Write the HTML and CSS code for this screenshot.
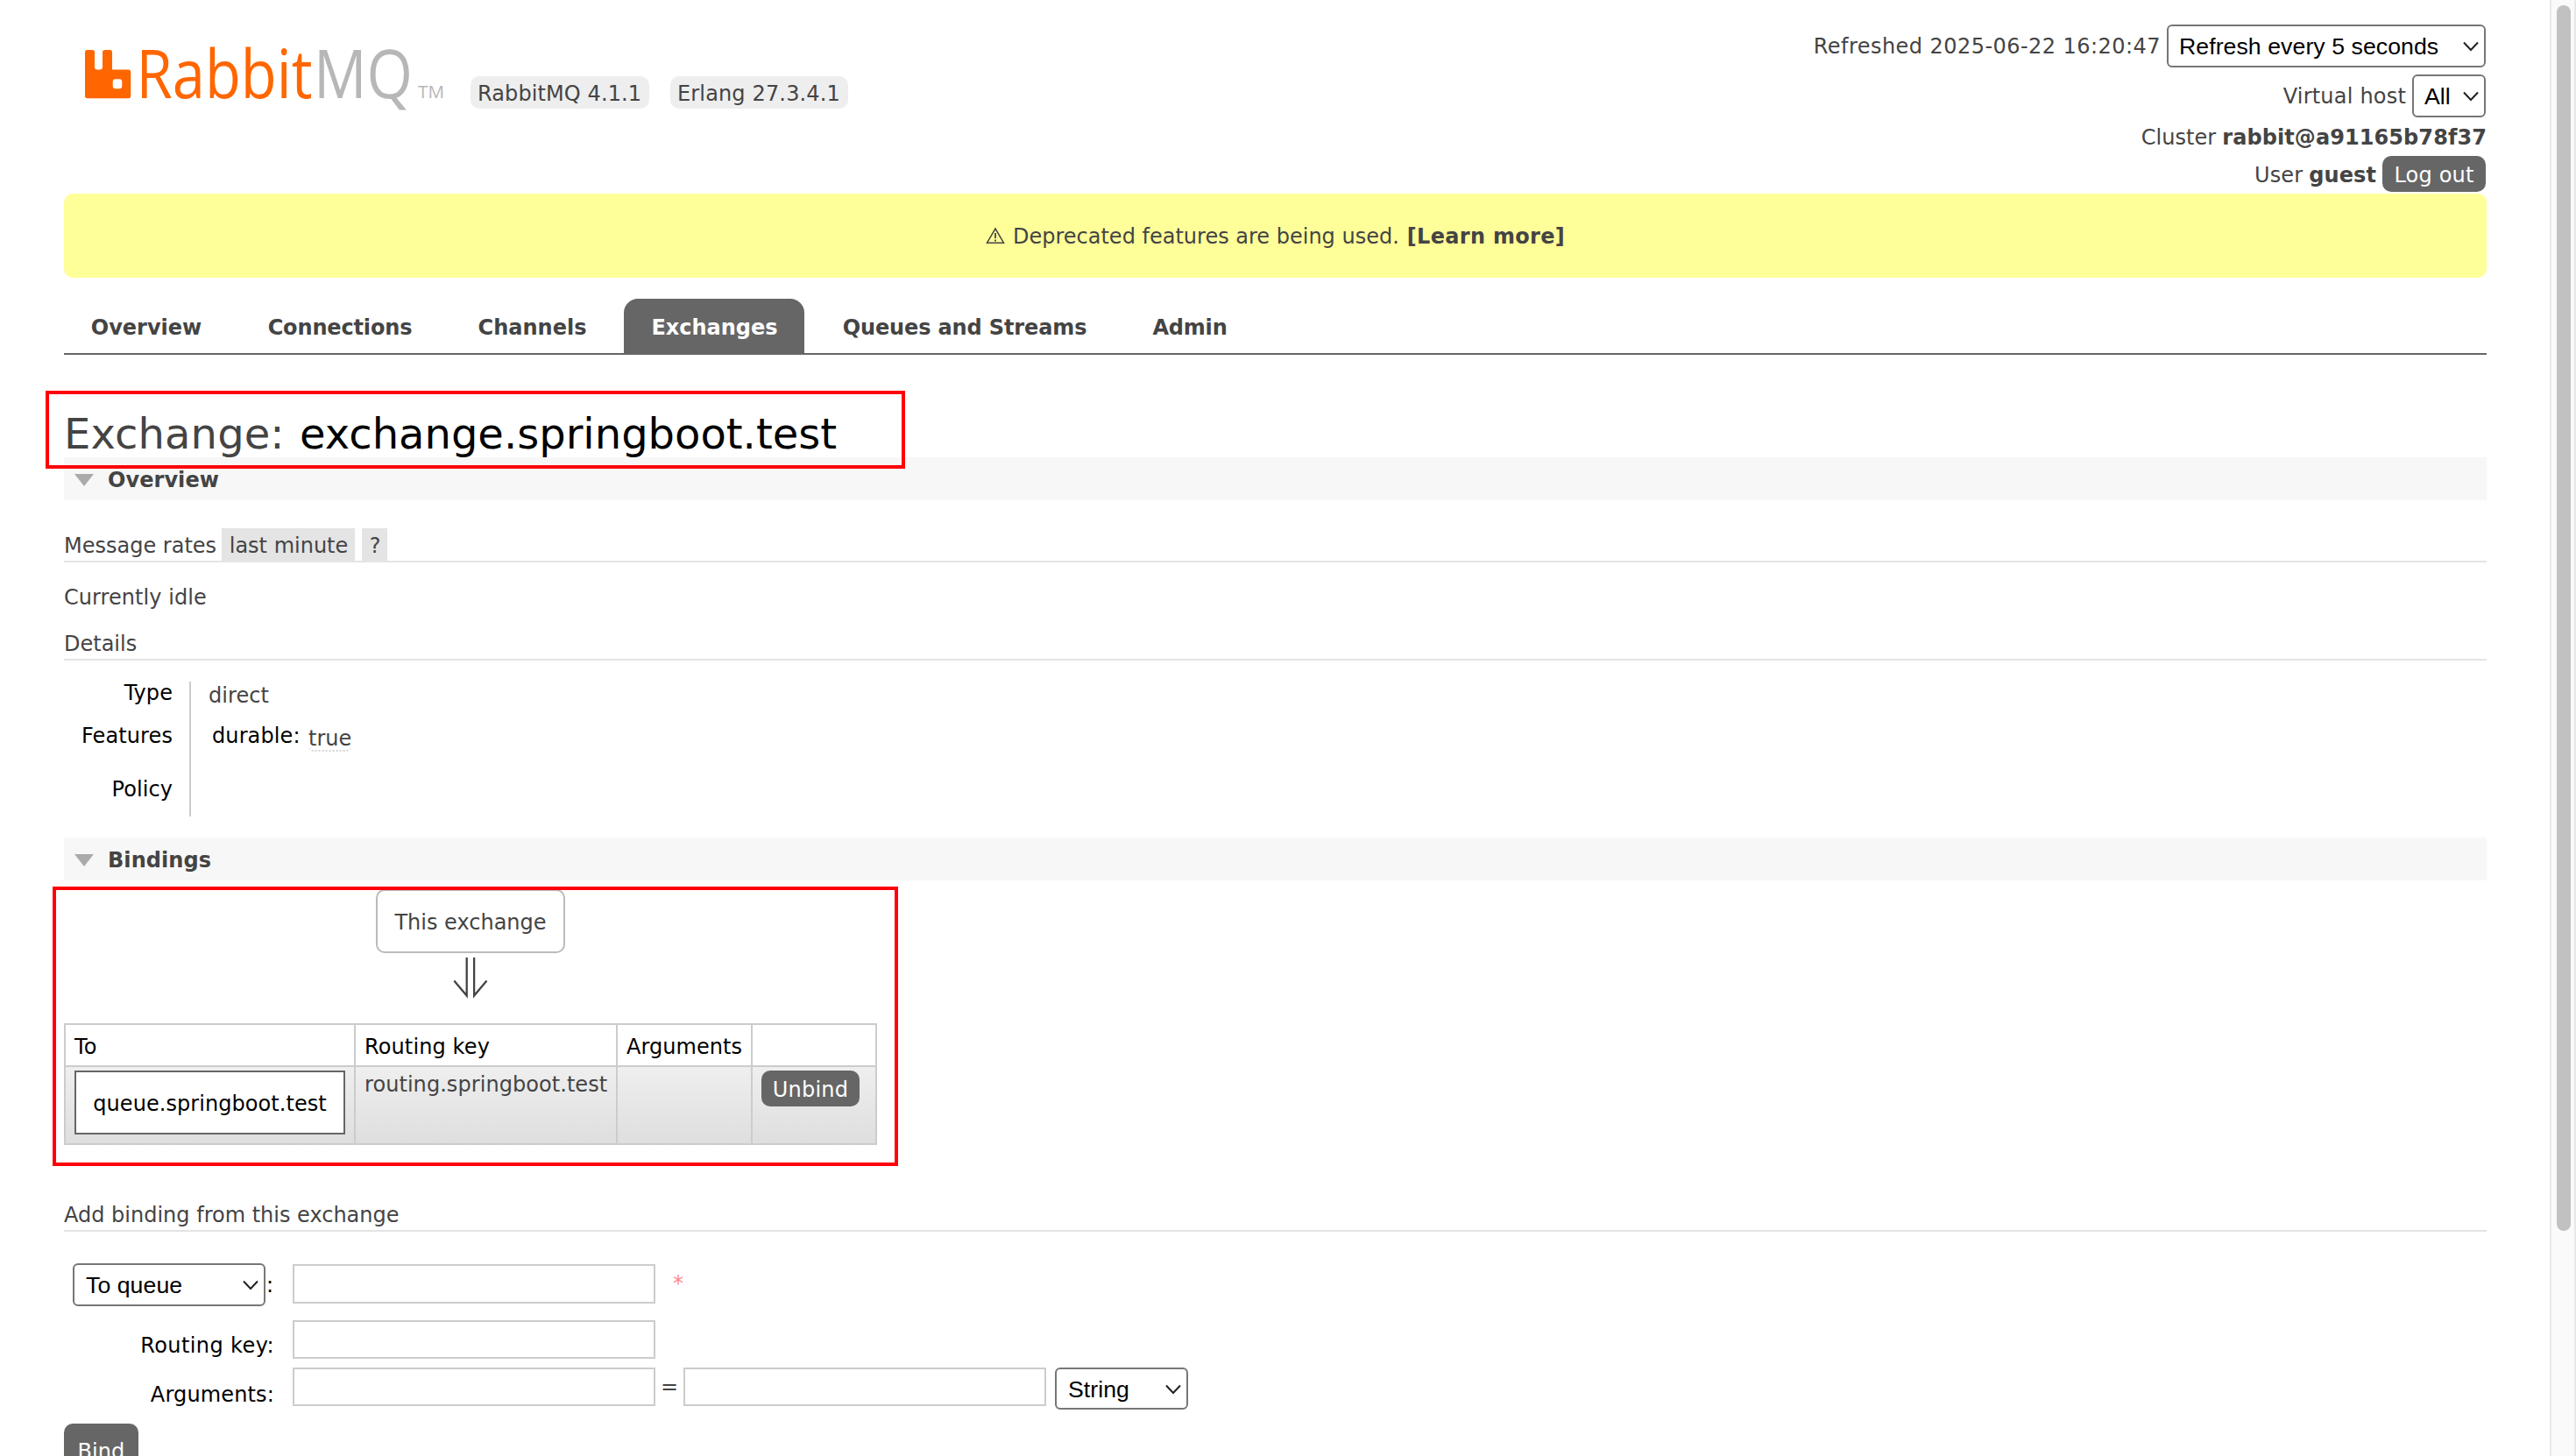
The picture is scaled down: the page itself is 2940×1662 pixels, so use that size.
FILE: index.html
```html
<!DOCTYPE html>
<html lang="en">
<head>
<meta charset="utf-8">
<title>RabbitMQ Management</title>
<link rel="stylesheet" href="styles.css">
</head>
<body>
<div class="page">
  <header class="header">
    <div class="brand">
      <svg class="logo" width="420" height="76" viewBox="90 44 420 76" role="img" aria-label="RabbitMQ">
        <path fill="#f60" fill-rule="evenodd" d="M99.500 57H105.500a2.500 2.500 0 0 1 2.500 2.500V76.500a3 3 0 0 0 3 3h3a3 3 0 0 0 3-3V59.500a2.500 2.500 0 0 1 2.500-2.500H125.500a2.500 2.500 0 0 1 2.500 2.500V79.500H146.500a2.700 2.700 0 0 1 2.700 2.700V109.600a2.700 2.700 0 0 1-2.700 2.700H99.700a2.700 2.700 0 0 1-2.700-2.700V59.500A2.500 2.500 0 0 1 99.500 57ZM132 90.300a3.300 3.300 0 0 0-3.300 3.300v4.400a3.300 3.300 0 0 0 3.300 3.300h4a3.300 3.300 0 0 0 3.300-3.300v-4.400a3.300 3.300 0 0 0-3.300-3.300Z"/>
        <text class="logo-text" x="155.500" y="112.300" fill="#f60" textLength="201" lengthAdjust="spacingAndGlyphs">Rabbit</text>
        <text class="logo-text" x="358" y="112.300" fill="#b7b7b7" textLength="113" lengthAdjust="spacingAndGlyphs">MQ</text>
        <text class="logo-tm" x="477" y="112.300" fill="#b7b7b7" textLength="30" lengthAdjust="spacingAndGlyphs">TM</text>
      </svg>
      <span class="version version-mq">RabbitMQ 4.1.1</span>
      <span class="version version-erl">Erlang 27.3.4.1</span>
    </div>
    <div class="status">
      <div class="status-row row-refresh">
        <span class="refreshed">Refreshed 2025-06-22 16:20:47</span>
        <span class="select select-refresh">Refresh every 5 seconds<svg class="chev" width="20" height="12" viewBox="0 0 20 12"><path d="M2 1.500L10 10L18 1.500"/></svg></span>
      </div>
      <div class="status-row row-vhost">
        <span class="vhost">Virtual host</span>
        <span class="select select-vhost">All<svg class="chev" width="20" height="12" viewBox="0 0 20 12"><path d="M2 1.500L10 10L18 1.500"/></svg></span>
      </div>
      <div class="status-row row-cluster"><span>Cluster</span><b class="cluster-name">rabbit@a91165b78f37</b></div>
      <div class="status-row row-user"><span class="user">User</span><b class="user-name">guest</b><span class="button button-logout">Log out</span></div>
    </div>
  </header>

  <div class="warning"><svg width="22" height="20" viewBox="0 0 22 20"><path d="M11 2L20.500 18.200H1.500Z" fill="none" stroke="#444" stroke-width="1.500"/><path d="M11 7V13M11 14.600V16.400" stroke="#444" stroke-width="1.800"/></svg><span>Deprecated features are being used.</span><b>[Learn more]</b></div>

  <nav class="tabs">
    <a class="tab tab-overview">Overview</a>
    <a class="tab tab-connections">Connections</a>
    <a class="tab tab-channels">Channels</a>
    <a class="tab tab-exchanges selected">Exchanges</a>
    <a class="tab tab-queues">Queues and Streams</a>
    <a class="tab tab-admin">Admin</a>
  </nav>

  <h1 class="title"><span class="title-kind">Exchange:</span><span class="title-name">exchange.springboot.test</span></h1>

  <h2 class="section"><svg width="24" height="16" viewBox="0 0 24 16"><path d="M1 1H23L12 15Z" fill="#aaa"/></svg>Overview</h2>
  <h3 class="sub sub-rates"><span>Message rates</span><span class="tag tag-range">last minute</span><span class="tag tag-help">?</span></h3>
  <p class="idle">Currently idle</p>
  <h3 class="sub sub-details">Details</h3>
  <div class="facts">
    <div class="fact-labels"><span>Type</span><span class="features">Features</span><span>Policy</span></div>
    <div class="fact-values"><span>direct</span><div class="feature"><span class="feature-key">durable:</span><abbr class="feature-value">true</abbr></div></div>
  </div>

  <h2 class="section section-bindings"><svg width="24" height="16" viewBox="0 0 24 16"><path d="M1 1H23L12 15Z" fill="#aaa"/></svg>Bindings</h2>
  <div class="bindings">
    <div class="this-exchange">This exchange</div>
    <svg class="arrow" width="44" height="50" viewBox="515 1091 44 50"><path d="M532.700 1093V1136.500L518.300 1119.500M541.100 1093V1136.500L555.500 1119.500" fill="none" stroke="#444" stroke-width="2.300"/></svg>
    <table class="binding-table">
      <colgroup><col class="col-to"><col class="col-key"><col class="col-args"><col class="col-action"></colgroup>
      <thead><tr><th>To</th><th class="key-head">Routing key</th><th>Arguments</th><th></th></tr></thead>
      <tbody><tr><td class="cell-box"><div class="queue">queue.springboot.test</div></td><td class="cell-text">routing.springboot.test</td><td></td><td class="cell-box"><span class="button button-unbind">Unbind</span></td></tr></tbody>
    </table>
  </div>

  <h3 class="sub sub-add">Add binding from this exchange</h3>
  <form class="form">
    <div class="form-row row-to"><div class="label label-select"><span class="select select-to">To queue<svg class="chev" width="20" height="12" viewBox="0 0 20 12"><path d="M2 1.500L10 10L18 1.500"/></svg></span>:</div><input class="input input-to" type="text"><span class="required">*</span></div>
    <div class="form-row row-key"><div class="label label-key">Routing key:</div><input class="input" type="text"></div>
    <div class="form-row row-args"><div class="label label-args">Arguments:</div><input class="input" type="text"><span class="equals">=</span><input class="input" type="text"><span class="select select-type">String<svg class="chev" width="20" height="12" viewBox="0 0 20 12"><path d="M2 1.500L10 10L18 1.500"/></svg></span></div>
    <span class="button button-bind">Bind</span>
  </form>
</div>
<div class="scrollbar"><div class="thumb"></div></div>
<div class="mark mark-title"></div>
<div class="mark mark-bindings"></div>
</body>
</html>
```
FILE: styles.css
```css
* { box-sizing: border-box; }
html, body { margin: 0; height: 1662px; overflow: hidden; }
body {
  display: flex;
  position: relative;
  width: 2940px;
  background: #fff;
  color: #444;
  font-family: "DejaVu Sans", sans-serif;
  font-size: 24px;
  letter-spacing: 0.06px;
  white-space: nowrap;
}
svg { display: block; flex: none; }
.page { width: 2910px; height: 1662px; padding: 0 72px 0 73px; overflow: hidden; }

/* header */
.header { display: flex; justify-content: space-between; height: 221px; }
.brand { display: flex; padding: 44px 0 0 17px; }
.logo { overflow: visible; }
.logo-text { font-family: "Open Sans", sans-serif; font-size: 77px; font-weight: 400; letter-spacing: 0; }
.logo-tm { font-family: "Open Sans", sans-serif; font-size: 20px; letter-spacing: 0; }
.version { height: 37px; margin-top: 43px; padding-left: 8px; line-height: 40px; background: #eee; border-radius: 10px; }
.version-mq { width: 204px; margin-left: 27px; letter-spacing: 0.1px; }
.version-erl { width: 203px; margin-left: 24px; letter-spacing: 0.15px; }
.status { padding: 28px 1px 0 0; }
.status-row { display: flex; justify-content: flex-end; gap: 7px; }
.row-refresh { height: 57px; line-height: 50px; }
.row-vhost { height: 50px; line-height: 50px; }
.row-cluster { height: 43px; margin-right: -1px; line-height: 44px; }
.row-user { height: 43px; line-height: 44px; }
.refreshed { letter-spacing: 0.45px; }
.vhost { letter-spacing: 0.2px; }
.cluster-name { letter-spacing: 0.08px; }
.user, .user-name { letter-spacing: 0.1px; }

.select {
  position: relative;
  flex: none;
  height: 49px;
  padding-left: 12px;
  border: 2px solid #767676;
  border-radius: 6px;
  background: #fff;
  color: #000;
  font-family: "Liberation Sans", sans-serif;
  font-size: 26.67px;
  line-height: 46px;
  text-align: left;
}
.chev { position: absolute; right: 5px; top: 17px; }
.chev path { fill: none; stroke: #222; stroke-width: 2; }
.select-refresh { width: 364px; }
.select-vhost { width: 84px; }

.button { display: block; height: 41px; border-radius: 10px; background: #666; color: #fff; line-height: 44px; text-align: center; }
.button-logout { width: 118px; letter-spacing: 0.2px; }

.warning { display: flex; justify-content: center; height: 96px; border-radius: 10px; background: #ff9; line-height: 98px; letter-spacing: 0; }
.warning svg { margin: 38px 9px 0 0; }
.warning b { margin-left: 9px; letter-spacing: 0.3px; }

/* navigation */
.tabs { display: flex; gap: 11px; height: 64px; margin-top: 24px; border-bottom: 2px solid #666; }
.tab { height: 62px; border-radius: 16px 16px 0 0; font-weight: bold; line-height: 66px; text-align: center; letter-spacing: 0; }
.selected { background: #666; color: #fff; }
.tab-overview { width: 190px; padding-right: 2px; }
.tab-connections { width: 228px; letter-spacing: -0.15px; }
.tab-channels { width: 188px; padding-left: 1px; }
.tab-exchanges { width: 206px; padding-left: 1px; }
.tab-queues { width: 344px; letter-spacing: -0.13px; }
.tab-admin { width: 148px; letter-spacing: -0.2px; }

/* headings */
.title { display: flex; height: 57px; margin: 60px 0 0; font-size: 48px; font-weight: normal; line-height: 60px; }
.title-kind { width: 269px; letter-spacing: 0.1px; }
.title-name { color: #000; letter-spacing: 0; }
.section { display: flex; height: 49px; margin: 0; padding-left: 11px; background: #f7f7f7; font-size: 24px; line-height: 52px; }
.section svg { margin: 18px 15px 0 0; }
.sub { display: flex; height: 39px; margin: 0; border-bottom: 2px solid #e4e4e4; font-size: 24px; font-weight: normal; line-height: 40px; letter-spacing: 0; }
.sub-rates { margin-top: 32px; }
.sub-rates > span:first-child { width: 180px; }
.tag { height: 37px; padding-left: 1px; background: #e4e4e4; text-align: center; }
.tag-range { width: 152px; }
.tag-help { width: 29px; margin-left: 8px; }
.idle { margin: 20px 0 0; line-height: 40px; }
.sub-details { margin-top: 13px; }

/* details */
.facts { display: flex; height: 154px; margin-top: 24px; line-height: 26px; }
.fact-labels { display: grid; grid-template-rows: 49px 61px 44px; width: 145px; padding-right: 19px; border-right: 2px solid #ccc; color: #000; text-align: right; }
.features { letter-spacing: 0.1px; }
.fact-values { display: grid; grid-template-rows: 49px 61px; padding: 3px 0 0 20px; }
.feature { display: flex; padding-left: 4px; }
.feature-key { width: 110px; margin-top: -3px; color: #000; letter-spacing: 0.1px; }
.feature-value { height: 28px; border-bottom: 2px dotted #d4d4d4; border-radius: 6px; text-decoration: none; letter-spacing: 0; }
.section-bindings { margin-top: 24px; }

/* bindings */
.bindings { display: flex; flex-direction: column; align-items: center; width: 928px; padding-top: 10px; }
.this-exchange { width: 216px; height: 73px; border: 2px solid #bbb; border-radius: 10px; line-height: 72px; text-align: center; letter-spacing: 0; }
.arrow { margin: 3px 0 27px; }
.binding-table { width: 926px; table-layout: fixed; border-collapse: collapse; }
.col-to { width: 331px; }
.col-key { width: 299px; }
.col-args { width: 154px; }
.col-action { width: 142px; }
.binding-table th { height: 48px; padding: 12px 10px 0; border: 2px solid #ccc; color: #000; font-weight: normal; line-height: 26px; text-align: left; vertical-align: top; }
.key-head { letter-spacing: 0.12px; }
.binding-table td { height: 89px; padding: 4px 10px 0; border: 2px solid #ccc; line-height: 26px; vertical-align: top; }
.binding-table tbody tr { background: linear-gradient(#efefef, #dedede); }
.binding-table .cell-text { padding-top: 7px; }
.queue { width: 309px; height: 73px; border: 2px solid #666; background: #fff; color: #000; line-height: 72px; text-align: center; }
.button-unbind { width: 112px; letter-spacing: 0.2px; }
.sub-add { margin-top: 60px; }

/* binding form */
.form { margin-top: 36px; }
.form-row { display: flex; }
.row-to { height: 65px; }
.row-key { height: 54px; }
.row-args { height: 64px; }
.label { width: 241px; margin-right: 20px; padding-right: 1px; color: #000; text-align: right; }
.label-select { display: flex; padding-left: 10px; padding-right: 0; line-height: 50px; }
.select-to { width: 220px; margin-right: 1px; padding-left: 13px; }
.label-key { padding-top: 8px; line-height: 42px; letter-spacing: 0.4px; }
.label-args { padding-top: 10px; line-height: 42px; letter-spacing: 0.15px; }
.input { width: 414px; height: 44px; padding: 0; border: 2px solid #ccc; background: #fff; font: inherit; }
.input-to { height: 45px; margin-top: 1px; }
.required { margin-left: 20px; color: #f88; line-height: 46px; }
.equals { width: 32px; line-height: 44px; text-align: center; }
.select-type { width: 152px; height: 48px; margin-left: 10px; padding-left: 13px; }
.button-bind { width: 85px; height: 60px; line-height: 64px; }

/* scrollbar */
.scrollbar { width: 30px; height: 1662px; padding: 6px 4px 0 6px; border: solid #e8e8e8; border-width: 0 2px; background: #fafafa; }
.thumb { width: 16px; height: 1399px; border-radius: 8px; background: #c1c1c1; }

/* highlight frames */
.mark { position: absolute; border: 4px solid #ff0008; }
.mark-title { left: 52px; top: 446px; width: 981px; height: 89px; }
.mark-bindings { left: 60px; top: 1012px; width: 965px; height: 319px; }
```
